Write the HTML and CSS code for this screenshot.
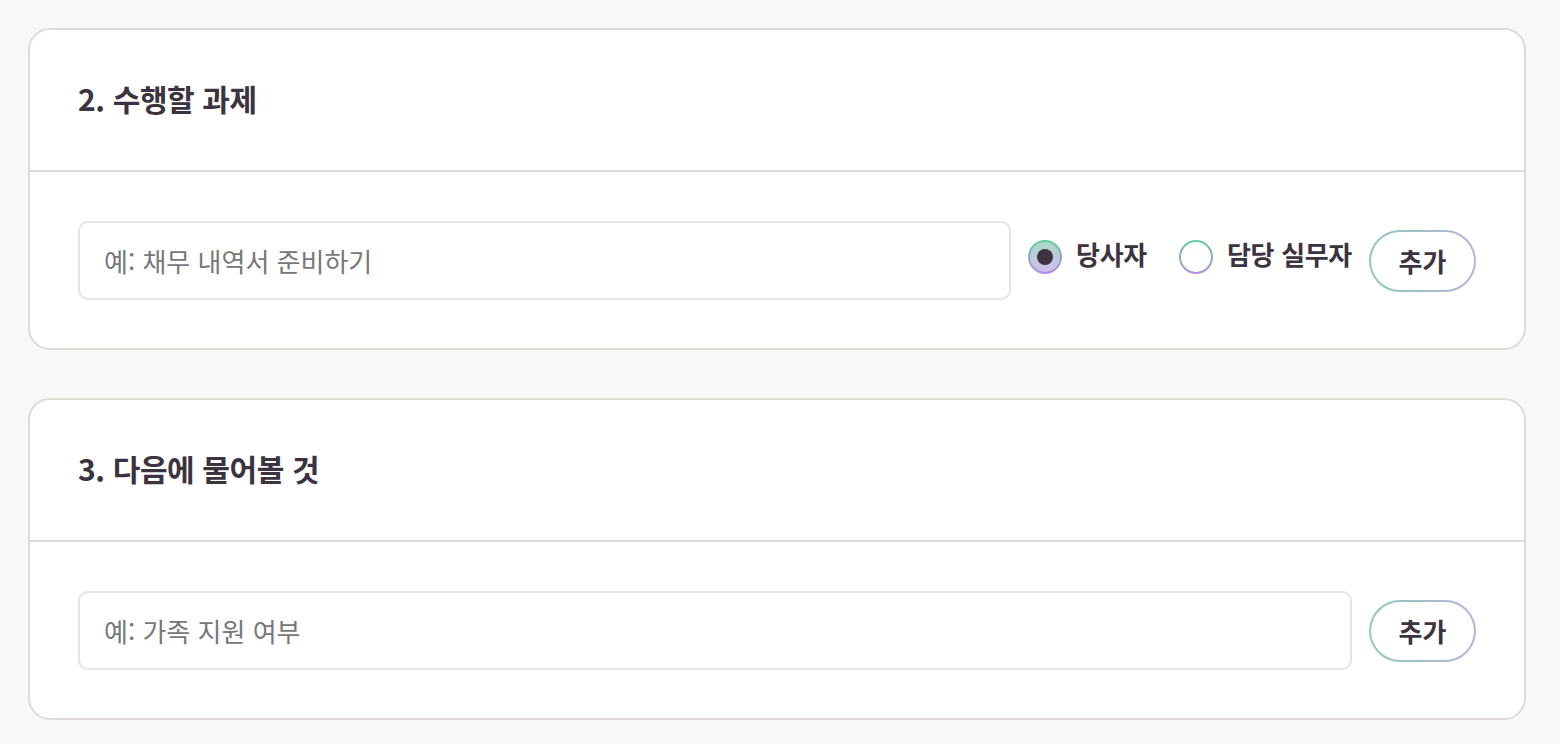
FILE: index.html
```html
<!DOCTYPE html>
<html lang="ko">
<head>
    <meta charset="UTF-8">
    <meta name="viewport" content="width=device-width, initial-scale=1.0">
    <title>체크리스트</title>
    <link rel="stylesheet" href="styles.css">
</head>
<body>
    <div class="page">
        <section class="card">
            <h2 class="card-title">2. 수행할 과제</h2>
            <div class="card-body">
                <input type="text" class="text-input" placeholder="예: 채무 내역서 준비하기">
                <div class="radio-group">
                    <label class="radio">
                        <input type="radio" name="owner" checked>
                        <span class="radio-mark"></span>
                        <span class="radio-label">당사자</span>
                    </label>
                    <label class="radio">
                        <input type="radio" name="owner">
                        <span class="radio-mark"></span>
                        <span class="radio-label">담당 실무자</span>
                    </label>
                </div>
                <button class="add-btn">추가</button>
            </div>
        </section>

        <section class="card">
            <h2 class="card-title">3. 다음에 물어볼 것</h2>
            <div class="card-body">
                <input type="text" class="text-input" placeholder="예: 가족 지원 여부">
                <button class="add-btn">추가</button>
            </div>
        </section>
    </div>
</body>
</html>
```
FILE: styles.css
```css
* {
    margin: 0;
    padding: 0;
    box-sizing: border-box;
    font-family: 'Noto Sans CJK KR', 'Noto Sans', sans-serif;
}

body {
    background: #f9f8f6;
    color: #3b3340;
}

.page {
    display: flex;
    flex-direction: column;
    gap: 48px;
    padding: 28px 34px 28px 28px;
}

.card {
    background: #fff;
    border: 2px solid #dedbd6;
    border-radius: 22px;
}

.card-title {
    font-size: 30px;
    font-weight: 700;
    line-height: 45px;
    padding: 46px 48px 49px;
    border-bottom: 2px solid #dedbd6;
    letter-spacing: -0.4px;
}

.card-body {
    display: flex;
    align-items: center;
    padding: 49px 48px 48px;
}

.text-input {
    flex: 1;
    height: 79px;
    padding: 0 24px;
    border: 2px solid #e4e4e4;
    border-radius: 10px;
    font-size: 26px;
    color: #3b3340;
    outline: none;
}

.text-input::placeholder {
    color: #777;
}

.radio-group {
    display: flex;
    gap: 32px;
    margin-left: 17px;
    margin-bottom: 8px;
}

.radio {
    display: flex;
    align-items: center;
    gap: 14px;
    cursor: pointer;
}

.radio input {
    display: none;
}

.radio-mark {
    width: 34px;
    height: 34px;
    border-radius: 50%;
    border: 2px solid transparent;
    background: linear-gradient(#fff, #fff) padding-box,
                linear-gradient(#5fcf9c, #b98ae8) border-box;
    display: flex;
    align-items: center;
    justify-content: center;
}

.radio input:checked + .radio-mark {
    background: linear-gradient(#a9dac6, #d0bde9) padding-box,
                linear-gradient(#5fcf9c, #b98ae8) border-box;
}

.radio input:checked + .radio-mark::after {
    content: '';
    width: 16px;
    height: 16px;
    border-radius: 50%;
    background: #3b3340;
}

.radio-label {
    font-size: 26px;
    font-weight: 700;
    letter-spacing: -0.3px;
    margin-top: -6px;
}

.add-btn {
    margin-left: 17px;
    width: 107px;
    height: 62px;
    border-radius: 31px;
    border: 2px solid transparent;
    background: linear-gradient(#fff, #fff) padding-box,
                linear-gradient(90deg, #8ecbb7, #bab2de) border-box;
    font-size: 26px;
    font-weight: 700;
    color: #3b3340;
    cursor: pointer;
}
```
